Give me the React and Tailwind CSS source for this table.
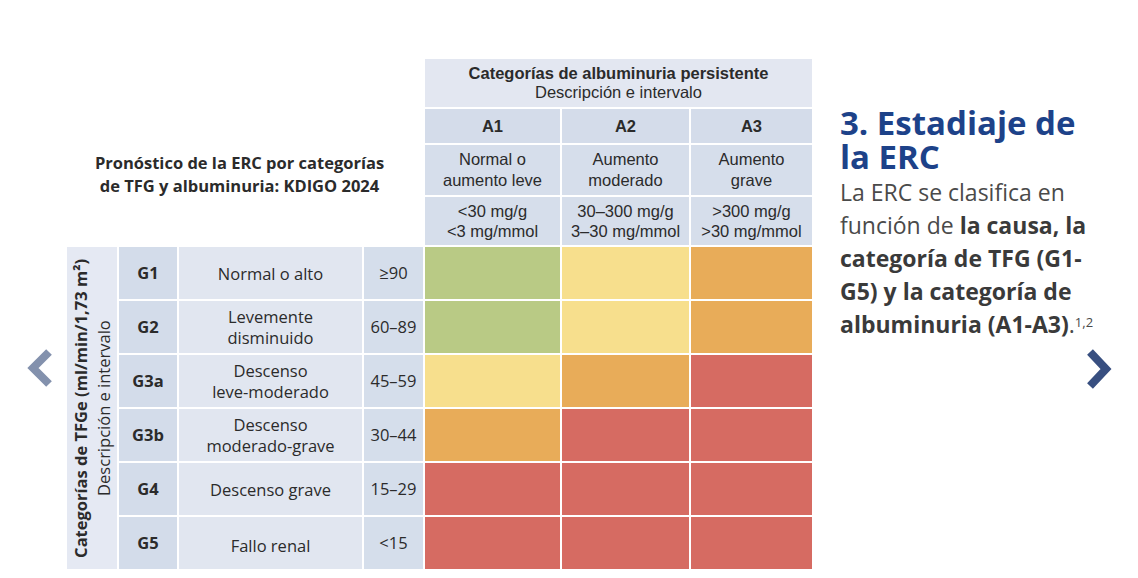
import React from "react";

const colors = {
  g: "bg-[#b9ca85]",
  y: "bg-[#f7df8d]",
  o: "bg-[#e8ac59]",
  r: "bg-[#d66b62]",
};

const rows = [
  { g: "G1", desc: ["Normal o alto"], range: "≥90", risk: ["g", "y", "o"] },
  { g: "G2", desc: ["Levemente", "disminuido"], range: "60–89", risk: ["g", "y", "o"] },
  { g: "G3a", desc: ["Descenso", "leve-moderado"], range: "45–59", risk: ["y", "o", "r"] },
  { g: "G3b", desc: ["Descenso", "moderado-grave"], range: "30–44", risk: ["o", "r", "r"] },
  { g: "G4", desc: ["Descenso grave"], range: "15–29", risk: ["r", "r", "r"] },
  { g: "G5", desc: ["Fallo renal"], range: "<15", risk: ["r", "r", "r"] },
];

const albu = [
  { a: "A1", desc: ["Normal o", "aumento leve"], range: ["<30 mg/g", "<3 mg/mmol"] },
  { a: "A2", desc: ["Aumento", "moderado"], range: ["30–300 mg/g", "3–30 mg/mmol"] },
  { a: "A3", desc: ["Aumento", "grave"], range: [">300 mg/g", ">30 mg/mmol"] },
];

const arial = "font-['Liberation_Sans',Arial,sans-serif]";
const open = "font-['Open_Sans',sans-serif]";

const Table = () => {
  return (
    <div className="grid grid-cols-[50px_58px_183px_59px_135px_127px_121px] grid-rows-[48px_34px_50px_48px_repeat(6,52px)] gap-[2px] bg-white text-[#2b2b2b]">
      {/* top left title */}
      <div className={`col-span-4 row-span-4 pt-[92px] pr-[11px] text-center font-bold text-[16.5px] leading-[23px] whitespace-nowrap ${open}`}>
        Pronóstico de la ERC por categorías
        <br />
        de TFG y albuminuria: KDIGO 2024
      </div>
      <div className={`col-span-3 bg-[#e3e7f1] flex flex-col items-center justify-center text-[16.5px] leading-[19px] ${arial}`}>
        <span className="font-bold">Categorías de albuminuria persistente</span>
        <span>Descripción e intervalo</span>
      </div>
      {albu.map((c) => (
        <div key={c.a} className={`bg-[#d4dcea] flex items-center justify-center font-bold text-[16.5px] ${arial}`}>
          {c.a}
        </div>
      ))}
      {albu.map((c) => (
        <div key={c.a + "d"} className={`bg-[#d6deeb] flex flex-col items-center justify-center text-[16.5px] leading-[21px] ${arial}`}>
          {c.desc.map((l) => (
            <span key={l}>{l}</span>
          ))}
        </div>
      ))}
      {albu.map((c) => (
        <div key={c.a + "r"} className={`bg-[#d6deeb] flex flex-col items-center justify-center text-[16.5px] leading-[20px] ${arial}`}>
          {c.range.map((l) => (
            <span key={l} className="whitespace-nowrap">{l}</span>
          ))}
        </div>
      ))}

      {/* vertical label */}
      <div className={`row-span-6 bg-[#e5e9f3] flex items-center justify-center ${open}`}>
        <div className="[writing-mode:vertical-rl] rotate-180 text-[16.5px] leading-[23px] text-center whitespace-nowrap">
          <span className="font-bold">Categorías de TFGe (ml/min/1,73 m²)</span>
          <br />
          <span>Descripción e intervalo</span>
        </div>
      </div>

      {rows.map((r) => (
        <React.Fragment key={r.g}>
          <div className={`bg-[#d3dcea] flex items-center justify-center font-bold text-[16.5px] ${open}`}>
            {r.g}
          </div>
          <div className={`bg-[#e1e6f0] flex flex-col items-center justify-center text-[16.5px] leading-[21px] whitespace-nowrap ${open} ${r.g === "G5" ? "pt-[4px]" : ""}`}>
            {r.desc.map((l) => (
              <span key={l}>{l}</span>
            ))}
          </div>
          <div className={`bg-[#d5deeb] flex items-center justify-center text-[16.5px] ${open}`}>
            {r.range}
          </div>
          {r.risk.map((k, i) => (
            <div key={i} className={colors[k]} />
          ))}
        </React.Fragment>
      ))}
    </div>
  );
};

const App = () => {
  return (
    <div className="relative w-[1138px] h-[578px] bg-white overflow-hidden">
      <div className="flex pl-[67px] pt-[59px]">
        <Table />
        <div className={`ml-[28px] mt-[47px] ${open}`}>
          <h1 className="text-[33px] leading-[34px] font-bold text-[#1d4289] whitespace-nowrap">
            3. Estadiaje de
            <br />
            la ERC
          </h1>
          <p className="mt-[2px] text-[23px] leading-[33px] text-[#4a4a4a] whitespace-nowrap">
            La ERC se clasifica en
            <br />
            función de <b className="text-[#3a3a3a]">la causa, la</b>
            <br />
            <b className="text-[#3a3a3a]">categoría de TFG (G1-</b>
            <br />
            <b className="text-[#3a3a3a]">G5) y la categoría de</b>
            <br />
            <b className="text-[#3a3a3a]">albuminuria (A1-A3)</b>.<sup className="text-[13px]">1,2</sup>
          </p>
        </div>
      </div>

      {/* carousel arrows */}
      <svg className="absolute left-[20px] top-[345px]" width="40" height="48" viewBox="20 345 40 48">
        <polyline points="49,352 33,368 49,384" fill="none" stroke="#8391ad" strokeWidth="8" strokeLinejoin="miter" />
      </svg>
      <svg className="absolute left-[1080px] top-[345px]" width="40" height="48" viewBox="1080 345 40 48">
        <polyline points="1090,352 1106,369 1090,386" fill="none" stroke="#384f80" strokeWidth="8" strokeLinejoin="miter" />
      </svg>
    </div>
  );
};

export default App;
